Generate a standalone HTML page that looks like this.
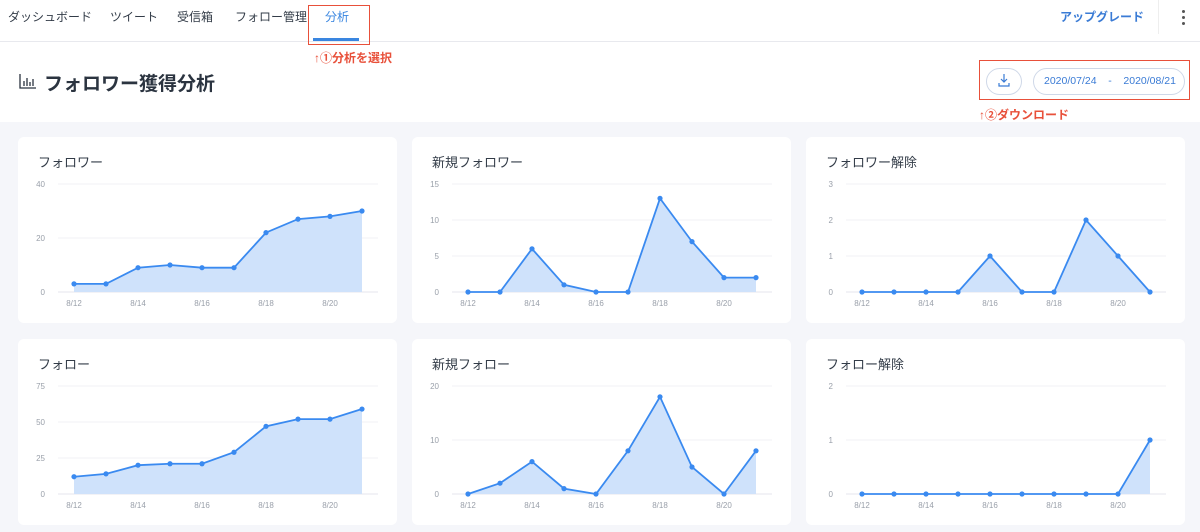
<!DOCTYPE html>
<html><head><meta charset="utf-8">
<style>
*{margin:0;padding:0;box-sizing:border-box}
body{width:1200px;height:532px;overflow:hidden;background:#f5f6fa;font-family:"Liberation Sans","Noto Sans CJK JP",sans-serif;position:relative}
.top{position:absolute;left:0;top:0;width:1200px;height:122px;background:#fff}
.nav{position:absolute;left:0;top:0;width:1200px;height:42px;border-bottom:1px solid #e8e9ee}
.nav span{position:absolute;top:8px;font-size:12px;color:#333c48}
.title{position:absolute;left:44px;top:69px;font-size:19px;font-weight:bold;color:#2b3440}
.red{position:absolute;border:1.5px solid #e8503a}
.note{position:absolute;font-size:12px;font-weight:bold;color:#e8503a}
.card{position:absolute;width:379px;height:186px;background:#fff;border-radius:6px}
.card h3{position:absolute;left:20px;top:15px;font-size:13px;font-weight:normal;color:#333c48}
.card svg{position:absolute;left:0;top:0}
.card text{font-family:"Liberation Sans",sans-serif;font-size:8px;fill:#9aa0aa}
</style></head><body>
<div class="top"></div>
<div class="nav">
<span style="left:8px">ダッシュボード</span>
<span style="left:110px">ツイート</span>
<span style="left:177px">受信箱</span>
<span style="left:235px">フォロー管理</span>
<span style="left:325px;color:#3a86e0">分析</span>
<div style="position:absolute;left:313px;top:38px;width:46px;height:3px;background:#3a86e0"></div>
<span style="left:1060px;color:#3a7bd5;font-weight:bold">アップグレード</span>
<div style="position:absolute;left:1158px;top:0;width:1px;height:34px;background:#eee"></div>
<div style="position:absolute;left:1182px;top:10px;width:3px;height:3px;border-radius:50%;background:#555;box-shadow:0 6px 0 #555,0 12px 0 #555"></div>
</div>
<div class="red" style="left:308px;top:5px;width:62px;height:40px"></div>
<div class="note" style="left:314px;top:49px">↑①分析を選択</div>
<svg style="position:absolute;left:19px;top:73px" width="18" height="16"><path d="M1 1V15H17M5 8V13M8 5V13M11 9V13M14 6V13" stroke="#2b3440" stroke-width="1.3" fill="none"/></svg>
<div class="title">フォロワー獲得分析</div>
<div class="red" style="left:979px;top:60px;width:211px;height:40px"></div>
<div style="position:absolute;left:986px;top:68px;width:36px;height:27px;border:1px solid #cfd8e8;border-radius:14px"></div>
<svg style="position:absolute;left:997px;top:73px" width="14" height="16"><path d="M7 1V9M4 6L7 9L10 6M2 10V13H12V10" stroke="#3a7bd5" stroke-width="1.2" fill="none"/></svg>
<div style="position:absolute;left:1033px;top:68px;width:152px;height:27px;border:1px solid #cfd8e8;border-radius:14px;font-size:10.5px;color:#3a7bd5;line-height:25px;padding-left:10px;white-space:pre">2020/07/24    -    2020/08/21</div>
<div class="note" style="left:979px;top:106px">↑②ダウンロード</div>

<div id="cards"></div>
<script>
const cards=[
[18,137,"フォロワー",[3,3,9,10,9,9,22,27,28,30],40,[0,20,40]],
[412,137,"新規フォロワー",[0,0,6,1,0,0,13,7,2,2],15,[0,5,10,15]],
[806,137,"フォロワー解除",[0,0,0,0,1,0,0,2,1,0],3,[0,1,2,3]],
[18,339,"フォロー",[12,14,20,21,21,29,47,52,52,59],75,[0,25,50,75]],
[412,339,"新規フォロー",[0,2,6,1,0,8,18,5,0,8],20,[0,10,20]],
[806,339,"フォロー解除",[0,0,0,0,0,0,0,0,0,1],2,[0,1,2]]];
let h="";
for(const [l,t,ti,v,m,ticks] of cards){
 const Y=x=>155-x/m*108, X=i=>56+32*i;
 let s=`<svg width="379" height="186">`;
 for(const tk of ticks){s+=`<line x1="40" x2="360" y1="${Y(tk)}" y2="${Y(tk)}" stroke="${tk?'#f0f1f5':'#e4e6ec'}"/><text x="27" y="${Y(tk)+3}" text-anchor="end">${tk}</text>`}
 const pts=v.map((a,i)=>X(i)+","+Y(a)).join(" ");
 s+=`<polygon points="56,155 ${pts} 344,155" fill="#cfe2fb"/><polyline points="${pts}" fill="none" stroke="#3a8af0" stroke-width="1.8"/>`;
 v.forEach((a,i)=>s+=`<circle cx="${X(i)}" cy="${Y(a)}" r="2.6" fill="#3a8af0"/>`);
 ["8/12","8/14","8/16","8/18","8/20"].forEach((d,k)=>s+=`<text x="${X(2*k)}" y="169" text-anchor="middle">${d}</text>`);
 s+="</svg>";
 h+=`<div class="card" style="left:${l}px;top:${t}px">${s}<h3>${ti}</h3></div>`;
}
document.getElementById("cards").innerHTML=h;
</script>
</body></html>
